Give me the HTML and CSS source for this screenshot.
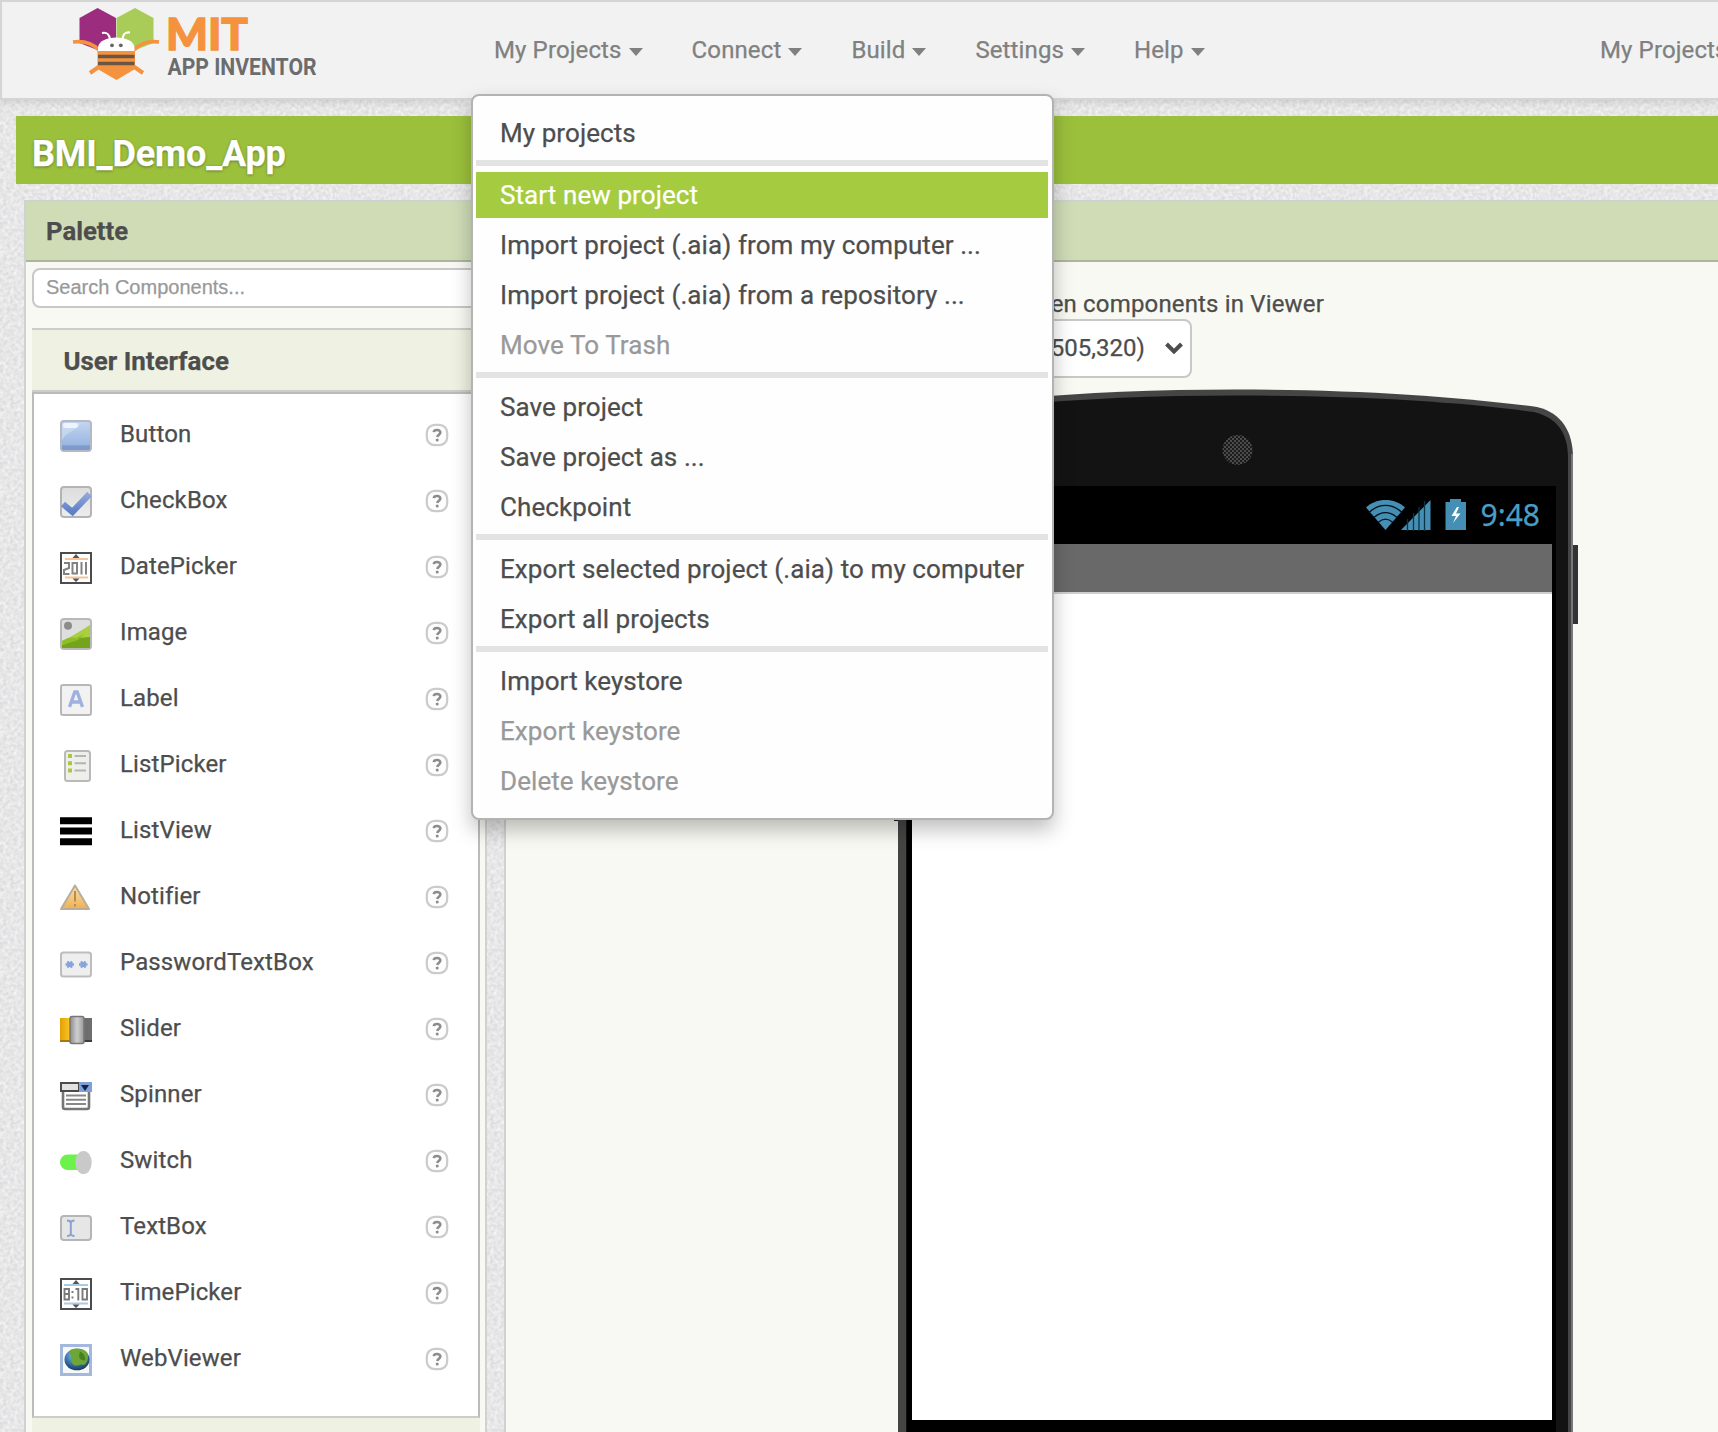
FILE: index.html
```html
<!DOCTYPE html>
<html lang="en">
<head>
<meta charset="utf-8">
<title>MIT App Inventor</title>
<link rel="stylesheet" href="styles.css">
</head>
<body>
<svg class="defs" width="0" height="0" aria-hidden="true">
  <defs>
    <linearGradient id="gBlue" x1="0" y1="0" x2="0" y2="1"><stop offset="0" stop-color="#c4d6f0"/><stop offset=".75" stop-color="#9db8e2"/><stop offset="1" stop-color="#86a3d6"/></linearGradient>
    <linearGradient id="gGrey" x1="0" y1="0" x2="0" y2="1"><stop offset="0" stop-color="#dcdcdc"/><stop offset="1" stop-color="#ededed"/></linearGradient>
    <linearGradient id="gTick" x1="0" y1="0" x2="0" y2="1"><stop offset="0" stop-color="#8ea9de"/><stop offset="1" stop-color="#5f7fc6"/></linearGradient>
    <linearGradient id="gWarn" x1="0" y1="0" x2="0" y2="1"><stop offset="0" stop-color="#f8e2b4"/><stop offset="1" stop-color="#efb050"/></linearGradient>
    <linearGradient id="gGold" x1="0" y1="0" x2="1" y2="0"><stop offset="0" stop-color="#e3a006"/><stop offset="1" stop-color="#ffc928"/></linearGradient>
    <linearGradient id="gKnob" x1="0" y1="0" x2="1" y2="0"><stop offset="0" stop-color="#8c8c8c"/><stop offset=".5" stop-color="#cfcfcf"/><stop offset="1" stop-color="#9a9a9a"/></linearGradient>
    <radialGradient id="gGlobe" cx=".45" cy=".3" r=".75"><stop offset="0" stop-color="#a5cde0"/><stop offset=".5" stop-color="#3f7fb5"/><stop offset="1" stop-color="#142d52"/></radialGradient>
    <pattern id="mesh" width="4" height="4" patternUnits="userSpaceOnUse"><rect width="4" height="4" fill="#1b1b1b"/><circle cx="1" cy="1" r=".95" fill="#606060"/><circle cx="3" cy="3" r=".95" fill="#606060"/></pattern>
    <symbol id="help" viewBox="0 0 24 24"><rect x="1.800" y="1.800" width="20.400" height="20.400" rx="8" fill="#fdfdfd" stroke="#cbcbcb" stroke-width="2.200"/><path d="M8.800 9.200C9 6.200 15.600 6.200 15.300 9.700C15.100 11.700 12.600 11.700 12.300 14" fill="none" stroke="#8c8c8c" stroke-width="2.600"/><circle cx="12.200" cy="17" r="1.500" fill="#8c8c8c"/></symbol>
  </defs>
</svg>

<header class="topbar">
  <svg class="logo" width="252" height="82" viewBox="70 0 252 82">
    <path d="M97.500 8L116 18V43L97.500 50L79.500 43V18Z" fill="#9c2d7e"/>
    <path d="M135 8L153.500 18V43L135 50L116.500 43V18Z" fill="#a9cc58"/>
    <path d="M73 42C84 40.500 92 43 99 50M159 42C148 40.500 141 43 134 50" fill="none" stroke="#f5923e" stroke-width="3.600"/>
    <path d="M90 73L100 66M143 73L133 66" stroke="#f5923e" stroke-width="4"/>
    <path d="M97.500 48H135V69L116.500 80L97.500 69Z" fill="#f5923e"/>
    <path d="M98 51V48C98 34 134.500 34 134.500 48V51Z" fill="#fff"/>
    <path d="M102 33C107 32 109 34 110 39M130 32.500C125 32 123 34 122.500 39" fill="none" stroke="#fff" stroke-width="2.200"/>
    <circle cx="112" cy="45.300" r="1.900" fill="#666"/><circle cx="120.800" cy="45.300" r="1.900" fill="#666"/>
    <path d="M98 56.500H134.500M98 63.500H134.500" stroke="#6b5644" stroke-width="3.400"/>
    <text class="logo-mit" x="166" y="50" textLength="82" lengthAdjust="spacingAndGlyphs">MIT</text>
    <text class="logo-app" x="167.500" y="74.500" textLength="149" lengthAdjust="spacingAndGlyphs">APP INVENTOR</text>
  </svg>
  <nav class="nav">
    <a class="nav-item">My Projects<i class="caret"></i></a>
    <a class="nav-item">Connect<i class="caret"></i></a>
    <a class="nav-item">Build<i class="caret"></i></a>
    <a class="nav-item">Settings<i class="caret"></i></a>
    <a class="nav-item">Help<i class="caret"></i></a>
  </nav>
  <a class="nav-item nav-right">My Projects</a>

  <ul class="menu">
    <li class="menu-item">My projects</li>
    <li class="menu-sep"></li>
    <li class="menu-item active">Start new project</li>
    <li class="menu-item">Import project (.aia) from my computer ...</li>
    <li class="menu-item">Import project (.aia) from a repository ...</li>
    <li class="menu-item disabled">Move To Trash</li>
    <li class="menu-sep"></li>
    <li class="menu-item">Save project</li>
    <li class="menu-item">Save project as ...</li>
    <li class="menu-item">Checkpoint</li>
    <li class="menu-sep"></li>
    <li class="menu-item">Export selected project (.aia) to my computer</li>
    <li class="menu-item">Export all projects</li>
    <li class="menu-sep"></li>
    <li class="menu-item">Import keystore</li>
    <li class="menu-item disabled">Export keystore</li>
    <li class="menu-item disabled">Delete keystore</li>
  </ul>
</header>

<div class="project-bar">BMI_Demo_App</div>

<main class="workspace">
  <section class="panel palette">
    <h2 class="panel-title">Palette</h2>
    <div class="palette-body">
      <div class="search">Search Components...</div>
      <h3 class="group-title">User Interface</h3>
      <ul class="components">
        <li class="component"><svg class="icon" viewBox="0 0 32 32"><rect x="1" y="1" width="30" height="30" rx="3" fill="url(#gBlue)" stroke="#b4b9c4" stroke-width="2"/><path d="M2 25.500H30V28.500Q30 30 28 30H4Q2 30 2 28.500Z" fill="#7d9ace"/><path d="M2 3H22Q16 9 9 13T2 22Z" fill="#d6e2f4" opacity=".55"/><rect x="3" y="3" width="15" height="5" rx="2.500" fill="#eef4fc"/></svg><span class="name">Button</span><svg class="help"><use href="#help"/></svg></li>
        <li class="component"><svg class="icon" viewBox="0 0 32 32"><rect x="1" y="1" width="30" height="30" rx="3" fill="url(#gGrey)" stroke="#b4b4b4" stroke-width="2"/><path d="M3 18L12.500 26L29.500 8" fill="none" stroke="url(#gTick)" stroke-width="6.200"/></svg><span class="name">CheckBox</span><svg class="help"><use href="#help"/></svg></li>
        <li class="component"><svg class="icon" viewBox="0 0 32 32"><rect x="1" y="1" width="30" height="30" fill="#fff" stroke="#4c4c4c" stroke-width="2"/><path d="M5 7H28M5 25.500H28" stroke="#f6c498" stroke-width="2"/><path d="M12.500 6L16 2L19.500 6ZM12.500 26.500L16 30L19.500 26.500Z" fill="#555"/><path d="M4 11H9V16L4 18V22H9.500M12.500 11H17V21.500H12.500ZM21.500 10V22.500M26 10V22.500" fill="none" stroke="#828282" stroke-width="2"/></svg><span class="name">DatePicker</span><svg class="help"><use href="#help"/></svg></li>
        <li class="component"><svg class="icon" viewBox="0 0 32 32"><rect x="1" y="1" width="30" height="30" rx="3" fill="#dedede" stroke="#b8b8b8" stroke-width="2"/><path d="M2 23L12 18L22 12L30 7V30H2Z" fill="#a9cf3f"/><path d="M2 27L12 21L18 20L30 19V30H2Z" fill="#74a41c"/><path d="M2 23Q9 18 16 20L24 16L18 22L3 27Z" fill="#8dbe25"/><circle cx="8" cy="7.800" r="4" fill="#8c8c8c"/></svg><span class="name">Image</span><svg class="help"><use href="#help"/></svg></li>
        <li class="component"><svg class="icon" viewBox="0 0 32 32"><rect x="1" y="1" width="30" height="30" rx="2" fill="#f2f2f2" stroke="#b8b8b8" stroke-width="2"/><path d="M9.500 23L14.800 8H17.200L22.500 23M12 18H20" fill="none" stroke="#9fb2df" stroke-width="3.400"/></svg><span class="name">Label</span><svg class="help"><use href="#help"/></svg></li>
        <li class="component"><svg class="icon" viewBox="0 0 32 32"><rect x="5" y="1" width="25" height="30" rx="2.500" fill="#eeeeea" stroke="#b9b9b9" stroke-width="2"/><path d="M8 6H12M8 13.200H12M8 20.500H12" stroke="#aac743" stroke-width="4"/><path d="M14.500 6H26M14.500 13.200H26M14.500 20.500H26" stroke="#b5b5b5" stroke-width="2"/></svg><span class="name">ListPicker</span><svg class="help"><use href="#help"/></svg></li>
        <li class="component"><svg class="icon" viewBox="0 0 32 32"><path d="M0 4.800H32M0 15H32M0 25.800H32" stroke="#000" stroke-width="7"/></svg><span class="name">ListView</span><svg class="help"><use href="#help"/></svg></li>
        <li class="component"><svg class="icon" viewBox="0 0 32 32"><path d="M15 3.500L29 27H1Z" fill="url(#gWarn)" stroke="#b9ad99" stroke-width="2" stroke-linejoin="round"/><path d="M15 9V19.500M15 22V24.500" stroke="#b58d4e" stroke-width="2"/></svg><span class="name">Notifier</span><svg class="help"><use href="#help"/></svg></li>
        <li class="component"><svg class="icon" viewBox="0 0 32 32"><rect x="1" y="4.500" width="30" height="24" rx="2.500" fill="#eeeeee" stroke="#bdbdbd" stroke-width="2"/><path d="M5.500 16.500H14M7.500 13.300L12 19.700M12 13.300L7.500 19.700M19 16.500H27.500M21 13.300L25.500 19.700M25.500 13.300L21 19.700" stroke="#86a4dc" stroke-width="2.300"/></svg><span class="name">PasswordTextBox</span><svg class="help"><use href="#help"/></svg></li>
        <li class="component"><svg class="icon" viewBox="0 0 32 32"><rect x="0" y="4" width="11" height="24" fill="url(#gGold)"/><rect x="24" y="4" width="8" height="24" fill="#6e6e6e"/><path d="M0 27H11" stroke="#a27a10" stroke-width="2"/><path d="M24 27H32" stroke="#3c3c3c" stroke-width="2"/><rect x="10" y="2.500" width="14" height="27" rx="2" fill="url(#gKnob)" stroke="#777" stroke-width="1.500"/></svg><span class="name">Slider</span><svg class="help"><use href="#help"/></svg></li>
        <li class="component"><svg class="icon" viewBox="0 0 32 32"><rect x="3" y="9" width="26" height="20" rx="2" fill="#fff" stroke="#777" stroke-width="2.600"/><path d="M6 15.500H26M6 19.700H26M6 24H26" stroke="#888" stroke-width="1.900"/><rect x="1" y="3" width="18" height="8" fill="#e2e2e2" stroke="#4c4c4c" stroke-width="2"/><rect x="19" y="2" width="13" height="10" fill="#7f9fda"/><path d="M21 5H29L25 11Z" fill="#16233f"/></svg><span class="name">Spinner</span><svg class="help"><use href="#help"/></svg></li>
        <li class="component"><svg class="icon" viewBox="0 0 32 32"><rect x="0" y="8.500" width="26" height="15.500" rx="7.500" fill="#6df24b"/><ellipse cx="23.500" cy="16.500" rx="8.200" ry="11.500" fill="#c9c9c9"/></svg><span class="name">Switch</span><svg class="help"><use href="#help"/></svg></li>
        <li class="component"><svg class="icon" viewBox="0 0 32 32"><rect x="1" y="4" width="30" height="24" rx="3" fill="#e6e6e6" stroke="#b5b5b5" stroke-width="2"/><path d="M7 8.500Q10.500 8.500 10.800 11Q11.100 8.500 14.500 8.500M10.800 10V22M7 24Q10.500 24 10.800 21.500Q11.100 24 14.500 24" fill="none" stroke="#8ba2d0" stroke-width="2"/></svg><span class="name">TextBox</span><svg class="help"><use href="#help"/></svg></li>
        <li class="component"><svg class="icon" viewBox="0 0 32 32"><rect x="1" y="1" width="30" height="30" fill="#fff" stroke="#4c4c4c" stroke-width="2"/><path d="M4 7H28M4 25.500H28" stroke="#a9cbe3" stroke-width="2"/><path d="M12.500 6L16 2L19.500 6ZM12.500 26.500L16 30L19.500 26.500Z" fill="#555"/><path d="M4.500 11H9V21.500H4.500ZM4.500 16H9M12.500 13V15M12.500 18.500V20.500M15.500 11H18.300V22.500M22.500 11H27V21.500H22.500Z" fill="none" stroke="#7a7a7a" stroke-width="1.900"/></svg><span class="name">TimePicker</span><svg class="help"><use href="#help"/></svg></li>
        <li class="component"><svg class="icon" viewBox="0 0 32 32"><rect x="1.500" y="1.500" width="29" height="29" fill="#f6f8fb" stroke="#a3b8dc" stroke-width="3"/><ellipse cx="17" cy="15.500" rx="12.500" ry="10.800" fill="url(#gGlobe)"/><path d="M10 6C16 3 24 4.500 27 8.500C29 12.500 28 18.500 24 21C20 19 18 23 14 21C9 18 13 12.500 10 10.500Z" fill="#6da536"/><path d="M20 7.500Q26 10.500 25 16.500Q20 16.500 19 12.500Z" fill="#467e22"/></svg><span class="name">WebViewer</span><svg class="help"><use href="#help"/></svg></li>
      </ul>
      <div class="group-next"></div>
    </div>
  </section>

  <section class="panel viewer">
    <h2 class="panel-title"></h2>
    <div class="viewer-body">
      <div class="option">Display hidden components in Viewer</div>
      <div class="size-select">Phone size (505,320)<svg width="18" height="12" viewBox="0 0 18 12"><path d="M1.500 2L9 9.500L16.500 2" fill="none" stroke="#4d4d4d" stroke-width="4"/></svg></div>
      <div class="phone">
        <svg class="frame" width="684" height="1044" viewBox="0 0 684 1044">
          <rect x="0" y="157" width="5" height="276" fill="#1c1c1c"/>
          <rect x="677" y="157" width="7" height="79" fill="#333"/>
          <path d="M4 1050V66C4 40 15 25 38 19C130 8 230 1.500 341 1.500C460 1.500 560 8 643 19C668 25 679 44 679 70V1050Z" fill="#454545"/>
          <path d="M678 1050V66" stroke="#77777a" stroke-width="2"/>
          <path d="M12 1050V68C12 44 20 30 42 25C130 14 230 7.500 341 7.500C460 7.500 560 13 640 24C664 30 674 46 674 70V1050Z" fill="#131313"/>
          <circle cx="343.500" cy="62" r="15" fill="url(#mesh)"/>
        </svg>
        <div class="screen">
          <div class="status">
            <svg width="101" height="32" viewBox="0 0 101 32">
              <path d="M0 8.500C10-1.500 29-1.500 39 8.500L19.500 31Z" fill="#468fb4"/>
              <path d="M3 13.500C13 4 26 4 36 13.500M8 18.500C15 12 24 12 31 18.500M12 23.500C17 19 22 19 27 23.500" fill="none" stroke="#03151f" stroke-width="1.400"/>
              <path d="M35 31L64.500 1V31Z" fill="#468fb4"/>
              <path d="M41.500 20V32M47.500 14V32M53 8V32M58.500 2V32" stroke="#0a3346" stroke-width="1.300"/>
              <path d="M79.500 3H84V0H95V3H100V31H79.500Z" fill="#468fb4"/>
              <path d="M91 8L85.500 17H90L87 24L94.500 14.500H90L93 8Z" fill="#fff"/>
            </svg>
            <span class="clock">9:48</span>
          </div>
          <div class="app-title"></div>
          <div class="app-canvas"></div>
        </div>
      </div>
    </div>
  </section>
</main>
</body>
</html>
```
FILE: styles.css
```css
* { box-sizing: border-box; }

body {
  margin: 0;
  height: 1432px;
  overflow: hidden;
  font-family: Roboto, sans-serif;
  font-size: 24px;
  letter-spacing: 0.12px;
  -webkit-text-stroke: 0.25px;
  color: #4d4d4d;
  background-color: #e6e6e7;
  background-image: url("data:image/svg+xml,%3Csvg xmlns='http://www.w3.org/2000/svg' width='240' height='240'%3E%3Cfilter id='n' x='0' y='0' width='100%25' height='100%25' color-interpolation-filters='sRGB'%3E%3CfeTurbulence type='fractalNoise' baseFrequency='.28' numOctaves='2' stitchTiles='stitch'/%3E%3CfeColorMatrix values='.16 0 0 0 .825 .16 0 0 0 .825 .16 0 0 0 .83 0 0 0 0 1'/%3E%3C/filter%3E%3Crect width='240' height='240' filter='url(%23n)'/%3E%3C/svg%3E");
}

h2, h3, ul { margin: 0; padding: 0; list-style: none; }
.defs { position: absolute; }

/* Top bar */
.topbar {
  position: relative;
  z-index: 2;
  display: flex;
  height: 100px;
  padding-left: 68px;
  background: #f2f2f2;
  border: 2px solid #d5d5d5;
  border-right: 0;
  box-shadow: 0 2px 8px rgba(0, 0, 0, 0.12);
}
.logo { margin-top: -2px; flex: none; }
.logo-mit { font: 900 44px Lato, sans-serif; letter-spacing: 0; fill: #f5923e; stroke: #f5923e; stroke-width: 1.4px; }
.logo-app { font: 700 23px Roboto, sans-serif; letter-spacing: 0; fill: #6b6c6e; -webkit-text-stroke: 0; }
.nav { display: flex; gap: 49px; margin-left: 172px; }
.nav-item {
  display: flex;
  align-items: center;
  height: 96px;
  color: #808080;
  white-space: nowrap;
}
.caret {
  margin: 3px 0 0 7px;
  border: 7.500px solid transparent;
  border-top: 8px solid #808080;
  border-bottom: 0;
}
.nav-right { width: 118px; margin-left: auto; }

/* Project menu */
.menu {
  position: absolute;
  left: 469px;
  top: 92px;
  width: 583px;
  height: 726px;
  padding: 14px 4px 0 3px;
  background: #fefefe;
  border: 2px solid #b3b3b3;
  border-radius: 8px;
  box-shadow: 0 10px 20px rgba(0, 0, 0, 0.25);
}
.menu-item {
  height: 46px;
  margin-bottom: 4px;
  padding-left: 24px;
  font-size: 26px;
  line-height: 47px;
  letter-spacing: 0.08px;
  white-space: nowrap;
}
.menu-item.active { background: #a5cb41; color: #fff; }
.menu-item.disabled { color: #999; }
.menu-sep { height: 6px; margin-bottom: 6px; background: #e3e3e3; }

.project-bar {
  height: 68px;
  margin: 16px 0 16px 16px;
  padding-left: 16px;
  background: #9bc03c;
  color: #fff;
  font-size: 36px;
  font-weight: 700;
  line-height: 77px;
  letter-spacing: -0.15px;
  text-shadow: 0 1px 3px rgba(0, 0, 0, 0.4);
}

/* Panels */
.workspace { display: flex; gap: 17px; padding-left: 24px; height: 1232px; }
.panel { border: 2px solid #d0d2d2; border-bottom: 0; background: #f8f9f2; }
.palette { width: 463px; flex: none; }
.viewer { flex: 1; border-right: 0; }
.panel-title {
  height: 60px;
  padding-left: 20px;
  border-bottom: 2px solid #adb4a2;
  background: #cfdcb6;
  font-size: 25.700px;
  line-height: 59px;
  letter-spacing: 0;
}
.palette-body { padding: 6px 5px 0 6px; }
.search {
  height: 40px;
  padding-left: 12px;
  background: #fff;
  border: 2px solid #c8c8c8;
  border-radius: 8px;
  color: #999;
  font: 20px/34px "Liberation Sans", sans-serif;
  letter-spacing: 0;
}
.group-title {
  height: 64px;
  margin-top: 20px;
  padding-left: 31.500px;
  background: #eff2e2;
  border-top: 2px solid #ccc;
  border-bottom: 2px solid #ccc;
  font-size: 25.900px;
  line-height: 62px;
  letter-spacing: 0;
}
.components {
  height: 1026px;
  padding: 9px 29px 0 26px;
  background: #fff;
  border: 2px solid #bbb;
  border-bottom-color: #ccc;
}
.component { display: flex; align-items: center; height: 66px; }
.icon { width: 32px; height: 32px; flex: none; }
.name { flex: 1; margin: -5px 0 0 28px; }
.component .help { width: 24px; height: 24px; margin-top: -2px; flex: none; }
.group-next { height: 20px; background: #eff2e2; }

/* Viewer */
.viewer-body { padding-top: 27px; }
.option { width: 818px; height: 30px; line-height: 30px; text-align: right; letter-spacing: 0.16px; }
.size-select {
  display: flex;
  align-items: center;
  justify-content: space-between;
  width: 285px;
  height: 59px;
  margin-left: 401px;
  padding: 0 7px 2px 11px;
  background: #fff;
  border: 2px solid #c8c8c8;
  border-radius: 8px;
  letter-spacing: 0;
}
.phone {
  position: relative;
  width: 684px;
  height: 1044px;
  margin: 10px 0 0 388px;
  padding: 98px 0 0 13px;
}
.frame { position: absolute; left: 0; top: 0; }
.screen { position: relative; width: 649px; height: 946px; padding: 0 4px 0 5px; background: #000; }
.status { display: flex; align-items: center; justify-content: flex-end; height: 58px; padding-right: 12px; }
.status svg { margin: -1px 1px 0 0; }
.clock { margin: 0 0 0 12px; color: #4a9ec6; font: 30px/40px "Noto Sans", sans-serif; letter-spacing: 0; }
.app-title { height: 50px; background: #696969; border-bottom: 2px solid #cfcfcf; }
.app-canvas { height: 826px; background: #fff; }
```
